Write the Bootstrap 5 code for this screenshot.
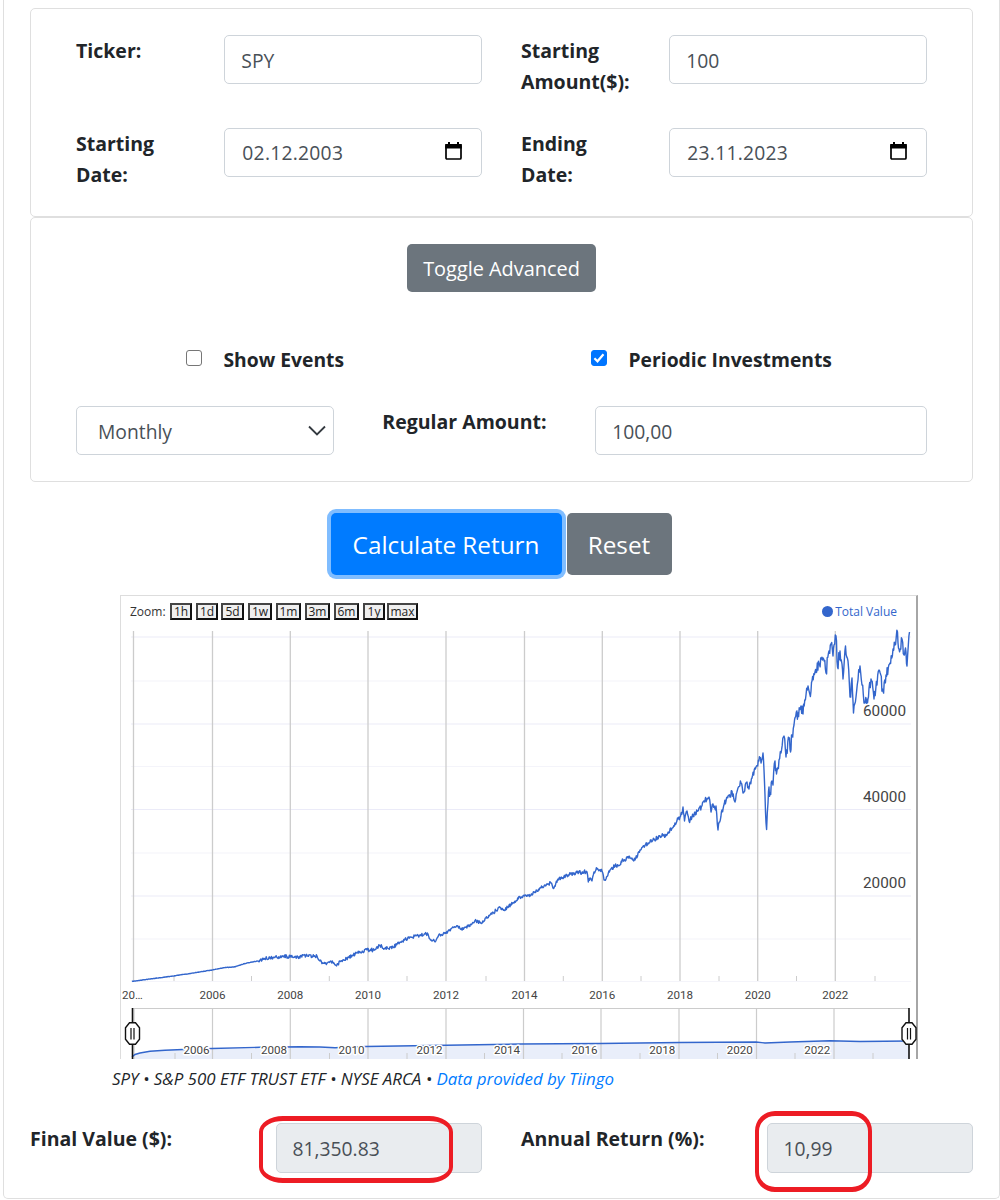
<!DOCTYPE html>
<html lang="en">
<head>
<meta charset="utf-8">
<meta name="viewport" content="width=device-width, initial-scale=1">
<title>Return Calculator</title>
<link href="https://cdn.jsdelivr.net/npm/bootstrap@5.3.0/dist/css/bootstrap.min.css" rel="stylesheet">
<style>
body{font-family:"Open Sans","Noto Sans",sans-serif;font-size:19.6px;line-height:31px;color:#212529;background:#fff;overflow:hidden}
.page-frame{width:997px;height:1199px;margin-left:3px;border:1px solid #dfdfdf;border-top:0;border-radius:0 0 5px 5px;padding:8px 26px 0}
.panel{border:1px solid #dfdfdf;border-radius:5px;padding:0 45px}
.row{--bs-gutter-x:39px}
.panel-top{height:208.5px;padding-top:26px}
.panel-adv{height:265px;padding-top:26.5px}
.field-row{height:93.3px}
.lbl{font-weight:700;font-size:19.5px;padding-top:0;line-height:31px}
.form-control{font-size:19.3px;height:49px;border:1px solid #ced4da;border-radius:5px;color:#495057;padding:1px 16px 0;line-height:31px}
.form-control[readonly]{background:#e9ecef}
.date-text{letter-spacing:.25px;padding:0 17px 1px}
.glyph{position:absolute;pointer-events:none}
.cal{right:19px;top:13px}
.chev{right:8px;top:19px}
select.form-control{appearance:none;padding-left:21px}
.btn{border-radius:5px;border:0;color:#fff;white-space:nowrap}
.btn-grey{background:#6c757d}
.btn-adv{width:189px;height:48px;font-size:19.9px;padding:2px 0 0}
.btn-big{height:62px;font-size:24.3px;padding:4px 0 0}
.btn-calc{width:231px;background:#007bff;box-shadow:0 0 0 4px #80bdff}
.btn-reset{width:105px}
.check-row{margin-top:52px;height:62px;padding-left:109.5px}
.tick{width:16px;height:16px;margin:6px 0 0;border:1px solid #767676;border-radius:3px;appearance:none;background:#fff}
.tick:checked{background:#0075ff;border-color:#0075ff}
.tick-label{font-weight:700;font-size:19.3px;margin-left:22px}
.check-first{width:405px}
.action-row{margin-top:31px;gap:5px;padding-right:1px}
.chart-box{width:798px;height:464px;margin:20px 0 0 90px;border:solid #ddd;border-width:1px 2px 0 1px;border-right-color:#a6a6a6}
.chart-head{height:29px;padding:7px 19px 0 9px;font-size:12px;line-height:17px;color:#333}
.zoom-btn{font-size:12px;line-height:13px;height:17px;padding:0;border:2px solid #111;border-top-color:#444;border-left-color:#444;background:#efefef;color:#222}
.legend{color:#36c;height:17px}
.legend-dot{width:11px;height:11px;border-radius:50%;background:#36c;margin-right:2px}
.chart-svg{display:block;margin-left:-1px}
.source-line{margin:4px 0 0 82px;font-size:16.9px;line-height:31px;font-style:italic;color:#212529;white-space:nowrap}
.source-line a{color:#007bff;text-decoration:none}
.result-row{margin-top:29px;margin-left:-19.5px;margin-right:-19.5px}
.result-row .form-control{height:50px}
.ring{position:absolute;border:5px solid #ed1c24;border-left-width:4px;border-right-width:4px}
.ring-value{left:-17px;top:-7px;width:194px;height:67px;border-radius:24px/16px}
.ring-rate{left:-12px;top:-12px;width:117px;height:81px;border-radius:20px}
.over{position:relative}
</style>
</head>
<body>
<main class="page-frame">
  <section class="panel panel-top">
    <div class="row field-row">
      <label class="col-2 lbl">Ticker:</label>
      <div class="col-4"><input class="form-control" value="SPY"></div>
      <label class="col-2 lbl text-nowrap">Starting<br>Amount($):</label>
      <div class="col-4"><input class="form-control" value="100"></div>
    </div>
    <div class="row field-row">
      <label class="col-2 lbl">Starting Date:</label>
      <div class="col-4"><div class="over"><input class="form-control date-text" value="02.12.2003">
        <svg class="glyph cal" width="19" height="20" viewBox="0 0 19 20"><path d="M3 4H16Q17 4 17 5V17Q17 18 16 18H3Q2 18 2 17V5Q2 4 3 4Z" fill="none" stroke="#000" stroke-width="1.7"/><path d="M1.2 3H17.8V7.5H1.2ZM4 1H6V4H4ZM13 1H15V4H13Z"/></svg></div></div>
      <label class="col-2 lbl">Ending<br>Date:</label>
      <div class="col-4"><div class="over"><input class="form-control date-text" value="23.11.2023">
        <svg class="glyph cal" width="19" height="20" viewBox="0 0 19 20"><path d="M3 4H16Q17 4 17 5V17Q17 18 16 18H3Q2 18 2 17V5Q2 4 3 4Z" fill="none" stroke="#000" stroke-width="1.7"/><path d="M1.2 3H17.8V7.5H1.2ZM4 1H6V4H4ZM13 1H15V4H13Z"/></svg></div></div>
    </div>
  </section>

  <section class="panel panel-adv">
    <div class="d-flex justify-content-center"><button class="btn btn-grey btn-adv">Toggle Advanced</button></div>
    <div class="check-row d-flex">
      <div class="d-flex check-first"><input type="checkbox" class="tick"><label class="tick-label">Show Events</label></div>
      <div class="d-flex"><div class="over"><input type="checkbox" class="tick d-block" checked><svg class="glyph top-0 start-0 mt-2" width="16" height="12" viewBox="0 2 16 12"><path d="M3.4 8.3 6.5 11.3 12.5 4.2" fill="none" stroke="#fff" stroke-width="2.2"/></svg></div><label class="tick-label">Periodic Investments</label></div>
    </div>
    <div class="row">
      <div class="col-4"><div class="over"><select class="form-control"><option>Monthly</option></select>
        <svg class="glyph chev" width="18" height="12" viewBox="0 0 18 12"><path d="M1 1.5 9 9.5 17 1.5" fill="none" stroke="#343a40" stroke-width="1.8"/></svg></div></div>
      <label class="col-3 lbl text-center text-nowrap">Regular Amount:</label>
      <div class="col-5"><input class="form-control" value="100,00"></div>
    </div>
  </section>

  <div class="action-row d-flex justify-content-center">
    <button class="btn btn-big btn-calc">Calculate Return</button>
    <button class="btn btn-grey btn-big btn-reset">Reset</button>
  </div>

  <section class="chart-box">
    <div class="chart-head d-flex justify-content-between">
      <div class="d-flex" id="zoomBar"><span style="width:40px">Zoom:</span></div>
      <div class="legend d-flex align-items-center"><span class="legend-dot"></span>Total Value</div>
    </div>
    <svg class="chart-svg" id="chart" width="798" height="434" viewBox="120 625 798 434" font-family="Roboto,'Liberation Sans',sans-serif"></svg>
  </section>

  <p class="source-line">SPY • S&amp;P 500 ETF TRUST ETF • NYSE ARCA • <a href="#">Data provided by Tiingo</a></p>

  <div class="row result-row">
    <label class="col-3 lbl text-nowrap">Final Value ($):</label>
    <div class="col-3"><div class="over"><input class="form-control" readonly value="81,350.83"><span class="ring ring-value"></span></div></div>
    <label class="col-3 lbl text-nowrap">Annual Return (%):</label>
    <div class="col-3"><div class="over"><input class="form-control" readonly value="10,99"><span class="ring ring-rate"></span></div></div>
  </div>
</main>
<script>
// Zoom presets: label, width, gap to the next one
[['1h',22,4],['1d',22,3],['5d',23,4],['1w',24,4],['1m',25,4],['3m',25,4],['6m',25,4],['1y',22,2],['max',31,0]].forEach(([t,w,g])=>{
  const b=document.createElement('button');b.className='zoom-btn';b.textContent=t;
  b.style.width=w+'px';b.style.marginRight=g+'px';document.getElementById('zoomBar').append(b);
});

const P=`132,981.5 150,979 173,976 190,973.5 212,970 225,967.5 234,967 245,963.5 252,962 258,961 265,958.5 275,957.5 283,955.8 290,957 298,957.5 303,955 312,956.5 317,956 320,961 325,963.5 330,961.5 334,963 336,965.5 341,961 349,957.5 357,953 367,950 373,950 380,945.5 385,948.5 393,947 402,941 411,937 420,935.5 425,934 428,934 430,939 436,940.5 440,934.5 445,933.5 452,928 458,926.5 461,929.5 468,926.5 475,920.5 481,923 490,915 500,907.5 504,910 513,903 520,897 525,895 528,896 535,892 545,885 551,883 554,888 558,879 562,878.5 568,875 577,872.5 587,872 588.3,882 590,878 592,881 594,872 597,869 602,871 604,880 606,879 610,870 615,866 620,865 623,860 630,858 635,860 640,850 648,843 660,836 667,835 675,823 680,817 683,807 684.5,821 687,811 689,821 695,812 699,808 702,806 705,800 709,797 711,812 713,804 715,809 716,806 718,830 722,810 726,801 730,797 732,791 735,802 738,788 741,783 743,793 747,782 749,789 752,778 756,767 760,758 761,763 763,753 764,770 765.5,812 766.6,829.5 768,803 769,787 770,793 772,781 773,785 775,761 776.5,774 779,760 781,753 784,736 786,757 789,738 790.5,752 792,735 794,725 798,713 801,706 803,714 806,695 808,686 811,691 812,681 815,672 819,664 823,658 826,673 829,651 831,644 833,656 834,645 836,636 837.5,667 840,651 842,664 843,679 845.5,646 848,661 850,697 852,678 853.5,713 856,697 858,680 860,666 862,685 864,703 867.5,703 869,688 871,679 874,699 877,685 879,670 883,691 886,675 890,663 893,649 895,645 897.5,632 899,649 902,639 904,655 905.5,648 907,666 909.5,632`.split(' ').map(s=>s.split(',').map(Number));
let seed=11;const rnd=()=>(seed=(seed*16807)%2147483647)/2147483647-.5;
// Daily movement between the trend points, growing with the balance
let line='M132 981.5';
for(let i=1;i<P.length;i++){
  const [x0,y0]=P[i-1],[x1,y1]=P[i],n=Math.max(1,Math.round((x1-x0)/.6));
  for(let k=1;k<=n;k++){
    const t=k/n,x=x0+(x1-x0)*t,a=x<258?.4:x<560?3.4:x<680?4.5:x<766?7:13;
    line+=`L${x.toFixed(1)} ${(y0+(y1-y0)*t+(k<n?rnd()*a:0)).toFixed(1)}`;
  }
}
let s='';
[637,724,809.5,896].forEach(y=>s+=`<path d="M131 ${y}H911" stroke="#ebebf8" stroke-width="1.2"/>`);
[681,766.5,853,939,981.5].forEach(y=>s+=`<path d="M131 ${y}H911" stroke="#f4f4fa" stroke-width="1.2"/>`);
const main=[133.5,212.5,290.3,368,446,524.5,602.3,680,757.7,835.3];
main.forEach(x=>s+=`<path d="M${x} 631V981" stroke="#ccc" stroke-width="1.3"/>`);
[174,251.5,329.3,407,486,563.3,641,719,796.5,875].forEach(x=>s+=`<path d="M${x} 976V981" stroke="#ccc"/>`);
s+=`<path d="${line}" fill="none" stroke="#36c" stroke-width="1.4" stroke-linejoin="round"/>`;
const txt=(t,x,y,z,a)=>`<text x="${x}" y="${y}" font-size="${z}" text-anchor="${a}" fill="#444" stroke="#fff" stroke-width="3" stroke-linejoin="round" paint-order="stroke">${t}</text>`;
s+=txt('60000',906,716.3,15.3,'end')+txt('40000',906,802,15.3,'end')+txt('20000',906,888,15.3,'end');
s+=txt('20…',122,998.5,11.6,'start');
for(let i=1;i<10;i++)s+=txt(2004+2*i,main[i],998.5,11.6,'middle');
// Range selector
const R='132,1057 135,1054.5 140,1053 150,1051.3 165,1050.2 183,1049.5 212,1048.5 260,1047.3 300,1046.8 320,1047 335,1047.8 366,1046.5 446,1045.3 520,1044 600,1043.5 680,1042.5 756,1042 765,1043 790,1042 830,1040.8 860,1041.5 909,1041';
const rg=[134,212.5,290.3,368,446,523.5,601,679,756.5,834];
s+='<path d="M132 1008.5H909" stroke="#ccc"/>';
s+=`<polygon points="${R} 909,1059 132,1059" fill="#e9eefa"/>`;
rg.forEach(x=>s+=`<path d="M${x} 1008V1059" stroke="#ccc" stroke-width="1.2"/>`);
[175,251.5,329.5,407,484.5,562,640,717.5,795,873].forEach(x=>s+=`<path d="M${x} 1053V1059" stroke="#ccc"/>`);
s+=`<polyline points="${R}" fill="none" stroke="#36c" stroke-width="1.4"/>`;
[196.5,274,351.5,429.5,507,584.5,662.3,739.7,817.3].forEach((x,i)=>s+=txt(2006+2*i,x,1054,11.6,'middle'));
[132.5,909].forEach(x=>s+=`<path d="M${x} 1008V1059" stroke="#111" stroke-width="1.6"/><path d="M${x-3} 1022.8h6l4 5v11.4l-4 5h-6l-4-5v-11.4z" fill="#fff" stroke="#111" stroke-width="1.4"/><path d="M${x-1.5} 1028V1039.5M${x+1.5} 1028V1039.5" stroke="#111" stroke-width="1.2"/>`);
document.getElementById('chart').innerHTML=s;
</script>
<script src="https://cdn.jsdelivr.net/npm/bootstrap@5.3.0/dist/js/bootstrap.bundle.min.js"></script>
</body>
</html>
